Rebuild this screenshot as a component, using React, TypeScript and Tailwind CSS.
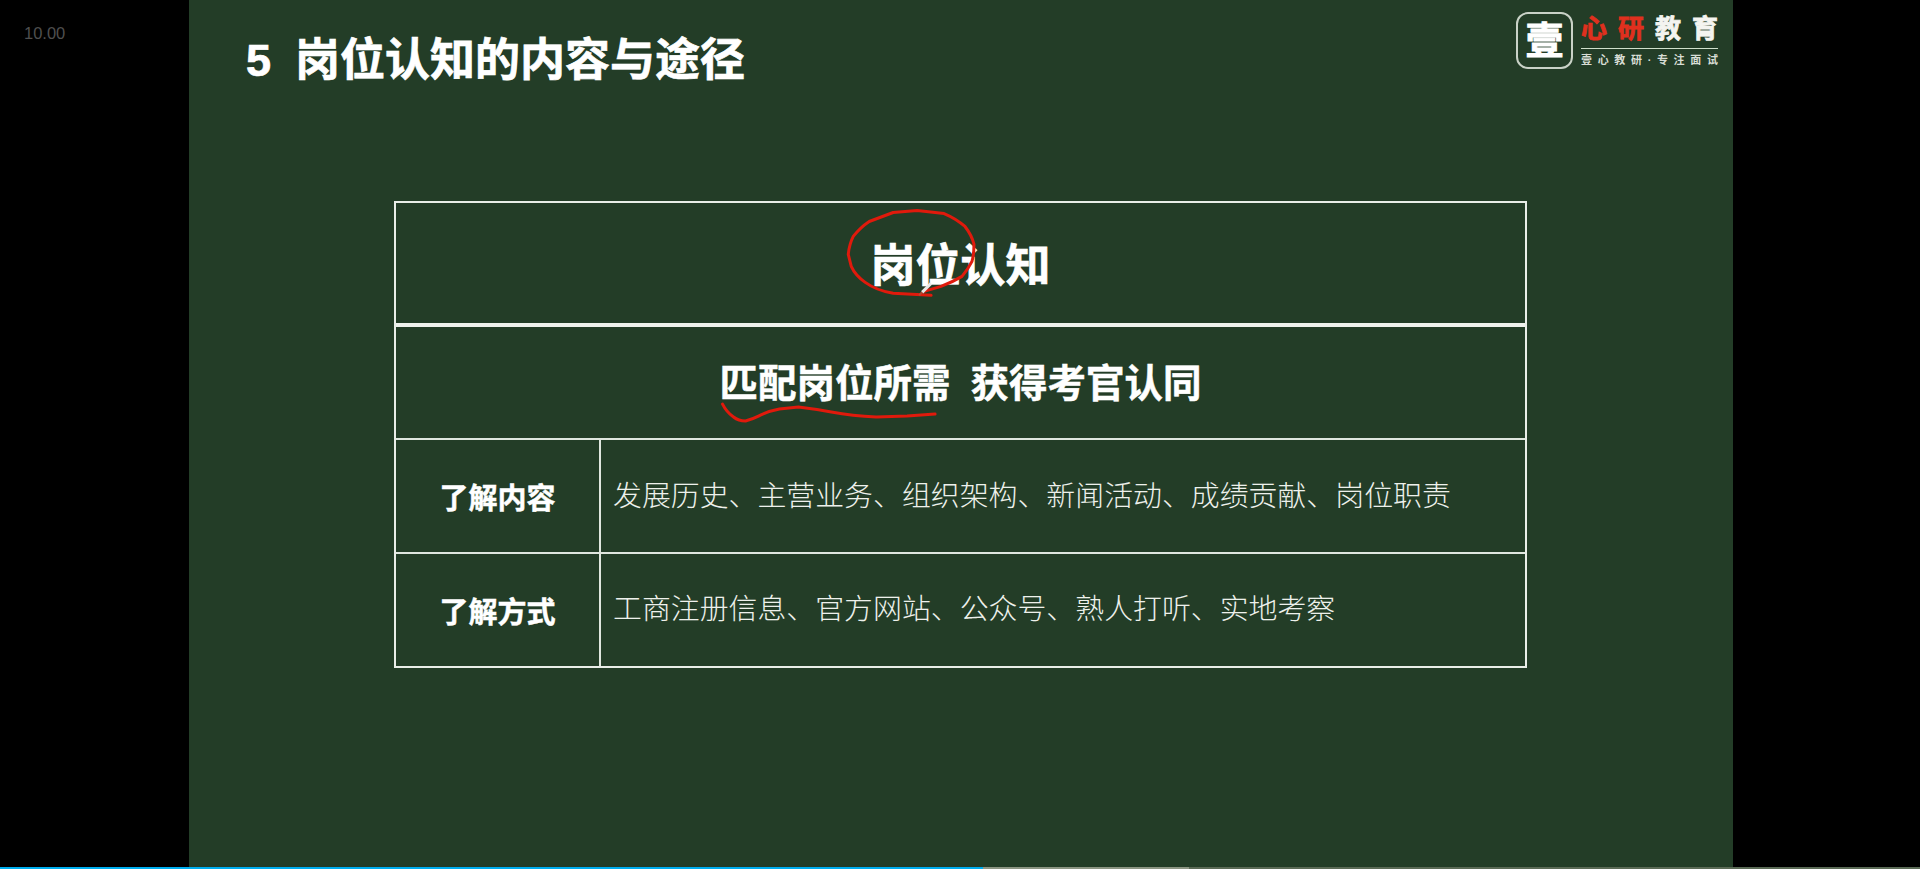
const cjk = "font-['Liberation_Sans','Noto_Sans_CJK_SC',sans-serif]";

function Logo() {
  return (
    <div className="flex gap-[8px] items-start">
      <div className="w-[57px] h-[57px] rounded-[12px] border-2 border-[#c9d2c7] flex items-center justify-center">
        <span className="text-[38px] leading-none font-bold text-white [-webkit-text-stroke:1px_white]">壹</span>
      </div>
      <div className="w-[137px] pt-[1px]">
        <div className="flex justify-between text-[26px] leading-[32px] font-bold [-webkit-text-stroke:0.8px]">
          <span className="text-[#e0301e]">心</span>
          <span className="text-[#e0301e]">研</span>
          <span className="text-[#f4f4f0]">教</span>
          <span className="text-[#f4f4f0]">育</span>
        </div>
        <div className="h-px bg-[#cfe0cc] mt-[3px]" />
        <div className="flex justify-between text-[11px] leading-[14px] mt-[4px] text-[#d8ddd5] font-bold">
          <span>壹</span>
          <span>心</span>
          <span>教</span>
          <span>研</span>
          <span>·</span>
          <span>专</span>
          <span>注</span>
          <span>面</span>
          <span>试</span>
        </div>
      </div>
    </div>
  );
}

function Ink() {
  return (
    <svg
      className="absolute inset-0 w-full h-full pointer-events-none"
      viewBox="189 0 1544 869"
      fill="none"
    >
      <path
        d="M931 296 L893 294 Q876 291 865 283 Q855 276 851 267 L848 255 Q849 245 853 237 Q860 228 869 222 L893 213 L917 211 L944 214 Q956 219 965 227 Q972 236 974 245 Q974 255 972 262 Q968 270 962 277 Q952 283 941 287 L924 292"
        stroke="#e01a0c"
        strokeWidth="3"
        strokeLinejoin="round"
        strokeLinecap="round"
      />
      <path
        d="M722 405 Q726 413 733 418 Q738 422 745 422 Q752 420 758 417 Q768 412 779 410 L798 408 Q815 410 831 413 Q852 417 876 418 L907 417 L935 415"
        stroke="#e01a0c"
        strokeWidth="3"
        strokeLinecap="round"
      />
      <path d="M931 284 L922 293" stroke="#e8e8e8" strokeWidth="3" />
      <path d="M922 293 L919 296" stroke="#b8452f" strokeWidth="2" />
    </svg>
  );
}

export default function App() {
  return (
    <div className={`w-[1920px] h-[869px] bg-black flex flex-col overflow-hidden ${cjk}`}>
      <div className="flex flex-1 min-h-0">
        <div className="w-[189px] pl-[24px] pt-[24px] text-[16.5px] leading-[18px] text-[#4f4f4f]">
          10.00
        </div>
        <div className="relative w-[1544px] bg-[#233d27]">
          <div className="flex justify-between items-start pl-[57px] pr-[15px] pt-[12px] h-[201px]">
            <h1 className="flex gap-[25px] text-[45px] leading-[58px] font-bold text-white mt-[20px] [-webkit-text-stroke:0.7px_white]">
              <span className="w-[24px]">5</span>
              <span>岗位认知的内容与途径</span>
            </h1>
            <Logo />
          </div>

          <div className="ml-[205px] w-[1133px] h-[467px] border-2 border-[#e9eee8] flex flex-col text-white">
            <div className="h-[120px] pt-[8px] flex items-center justify-center text-[45px] font-bold [-webkit-text-stroke:0.7px_white]">
              岗位认知
            </div>
            <div className="h-[115px] border-t-4 border-[#eef2ed] flex items-center justify-center gap-5 text-[38.5px] font-bold pt-[2px] [-webkit-text-stroke:0.5px_white]">
              <span>匹配岗位所需</span>
              <span>获得考官认同</span>
            </div>
            <div className="h-[114px] border-t-2 border-[#e0e7df] flex">
              <div className="w-[205px] flex items-center justify-center text-[29px] font-bold border-r-2 border-[#e0e7df] pt-[8px] [-webkit-text-stroke:0.5px_white]">
                了解内容
              </div>
              <div className="flex-1 flex items-center pl-[12px] pt-[2px] text-[28.9px] font-light text-[#eef1ec]">
                发展历史、主营业务、组织架构、新闻活动、成绩贡献、岗位职责
              </div>
            </div>
            <div className="flex-1 border-t-2 border-[#e0e7df] flex">
              <div className="w-[205px] flex items-center justify-center text-[29px] font-bold border-r-2 border-[#e0e7df] pt-[8px] [-webkit-text-stroke:0.5px_white]">
                了解方式
              </div>
              <div className="flex-1 flex items-center pl-[12px] text-[28.9px] font-light text-[#eef1ec]">
                工商注册信息、官方网站、公众号、熟人打听、实地考察
              </div>
            </div>
          </div>
          <Ink />
        </div>
        <div className="flex-1" />
      </div>
      <div className="h-[2px] flex shrink-0 bg-[#5b6b56]">
        <div className="w-[983px] bg-[#00aeef]" />
        <div className="w-[206px] bg-[#8c9683]" />
      </div>
    </div>
  );
}
